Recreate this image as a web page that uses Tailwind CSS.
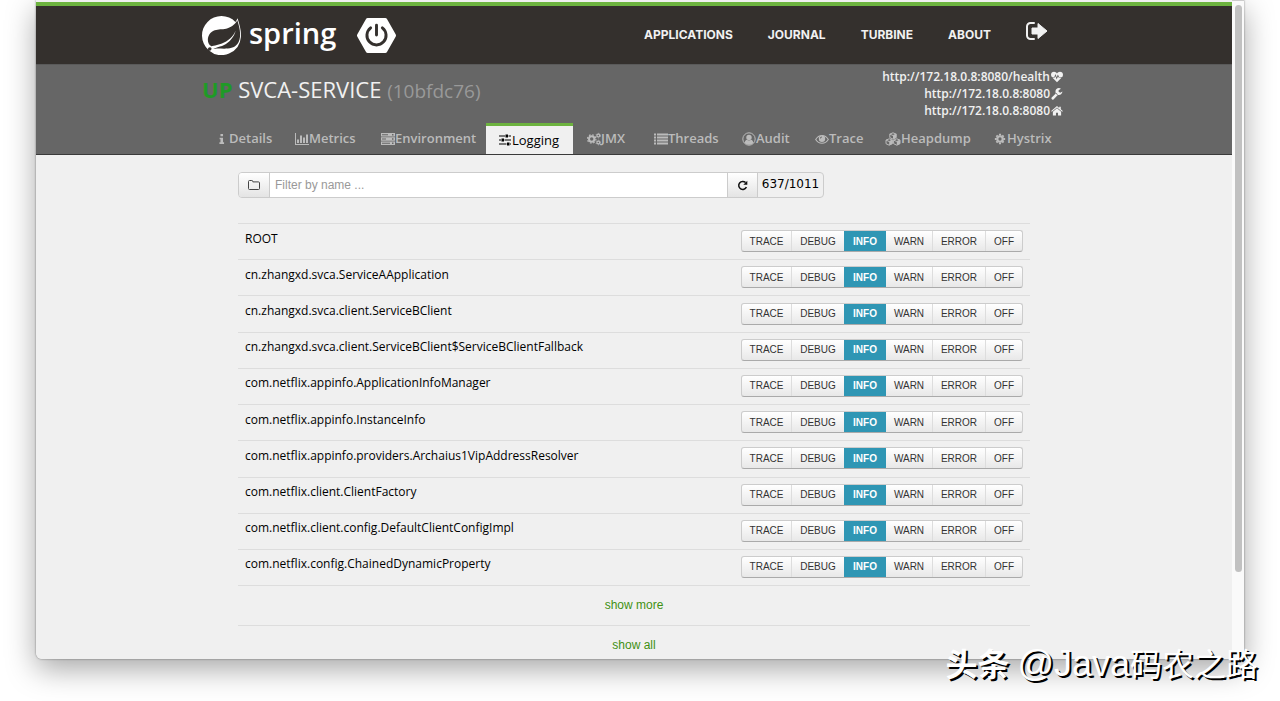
<!DOCTYPE html>
<html lang="en">
<head>
<meta charset="utf-8">
<title>SVCA-SERVICE - Logging</title>
<script src="https://cdn.jsdelivr.net/npm/@tailwindcss/browser@4"></script>
</head>
<body class="min-h-screen bg-white font-['Open_Sans','Noto_Sans',sans-serif] text-black">
<svg class="hidden" aria-hidden="true">
  <symbol id="i-info" viewBox="0 0 14 14"><path d="M5.200 1.200h3v2.500h-3zM4.200 5.400h4v5.400h1.200v2h-5.400v-2h1.200V7.400H4.200z"/></symbol>
  <symbol id="i-chart" viewBox="0 0 14 14"><path d="M0 1h1v11h13v1H0zM2 7.500h2V11H2zM5 3.500h2V11H5zM8 5.500h2V11H8zM11 2.500h2V11h-2z"/></symbol>
  <symbol id="i-server" viewBox="0 0 14 14"><path fill-rule="evenodd" d="M0 1h14v3.600H0zM1 2.300v1h6v-1zM11 2v1.500h1.500V2zM0 5.200h14v3.600H0zM1 6.500v1h4v-1zM11 6.200v1.500h1.500V6.200zM0 9.400h14V13H0zM1 10.700v1h8v-1zM11 10.400v1.500h1.500v-1.500z"/></symbol>
  <symbol id="i-sliders" viewBox="0 0 14 14"><path d="M1 2.500h6v1H1zM10.500 2.500H13v1h-2.500zM7.500 1.500h2.500v3H7.500zM1 6.500h2v1H1zM6.500 6.500H13v1H6.500zM3.500 5.500H6v3H3.500zM1 10.500h7.500v1H1zM12 10.500h1v1h-1zM9 9.500h2.500v3H9z"/></symbol>
  <symbol id="i-cogs" viewBox="0 0 14 14"><g fill="none" stroke="currentColor"><circle cx="4.700" cy="7" r="2.700" stroke-width="2"/><circle cx="4.700" cy="7" r="4.200" stroke-width="1.200" stroke-dasharray="1.650 1.650"/><circle cx="11.300" cy="3.600" r="1.400" stroke-width="1.200"/><circle cx="11.300" cy="3.600" r="2.300" stroke-width=".8" stroke-dasharray="1.200 1.200"/><circle cx="11.300" cy="10.500" r="1.400" stroke-width="1.200"/><circle cx="11.300" cy="10.500" r="2.300" stroke-width=".8" stroke-dasharray="1.200 1.200"/></g></symbol>
  <symbol id="i-list" viewBox="0 0 14 14"><path d="M0 1.500h2v2H0zM3 1.500h11v2H3zM0 4.500h2v2H0zM3 4.500h11v2H3zM0 7.500h2v2H0zM3 7.500h11v2H3zM0 10.500h2v2H0zM3 10.500h11v2H3z"/></symbol>
  <symbol id="i-user" viewBox="0 0 14 14"><circle cx="7" cy="7" r="6.200" fill="none" stroke="currentColor"/><circle cx="7" cy="5.500" r="2.700"/><path d="M2.500 11c.3-2 1.300-3 2.500-3.200.5.500 1.200.8 2 .8s1.500-.3 2-.8c1.200.2 2.200 1.200 2.500 3.200A6 6 0 0 1 7 12.800 6 6 0 0 1 2.500 11z"/></symbol>
  <symbol id="i-eye" viewBox="0 0 14 14"><path fill="none" stroke="currentColor" stroke-width="1.100" d="M.7 7.500C2.200 5 4.400 3.500 7 3.500s4.800 1.500 6.300 4C11.800 9.900 9.600 11.300 7 11.300S2.200 9.900.7 7.500z"/><path fill-rule="evenodd" d="M7 3.500a3.200 3.200 0 1 1 0 6.400 3.200 3.200 0 0 1 0-6.400zM7 4.600c-1.200 0-2 .9-2 2h.8c0-.7.500-1.200 1.200-1.200z"/></symbol>
  <symbol id="i-cubes" viewBox="0 0 16 14"><g fill="none" stroke="currentColor" stroke-linejoin="round"><path d="M8 .8l3.200 1.300v3.500L8 7.100 4.800 5.600V2.100zM4.800 2.100L8 3.500l3.200-1.400"/><path d="M4.200 6.800l3.200 1.300v3.600l-3.200 1.500L1 11.700V8.100zM1 8.100l3.200 1.400 3.200-1.400M11.800 6.800L15 8.100v3.600l-3.200 1.500-3.200-1.500V8.100zM8.600 8.100l3.200 1.400L15 8.100"/></g><path d="M8 3.500l3.200-1.400v3.500L8 7.100zM4.200 9.500l3.200-1.400v3.600l-3.200 1.500zM11.800 9.500L15 8.100v3.600l-3.200 1.500z"/></symbol>
  <symbol id="i-cog" viewBox="0 0 14 14"><g fill="none" stroke="currentColor"><circle cx="7" cy="7" r="3.200" stroke-width="2.600"/><path stroke-width="2.400" d="M7 1v2M7 11v2M1 7h2M11 7h2M2.800 2.800l1.300 1.300M9.900 9.900l1.300 1.300M2.800 11.200l1.300-1.300M9.900 4.100l1.300-1.300"/></g></symbol>
  <symbol id="i-heart" viewBox="0 0 14 14"><path d="M7 13L1.500 7.700h3L5.300 6l1.300 4 1.500-3.700.8 1.400h3.600zM.9 6.900C.3 6 0 5.200 0 4.400 0 2.400 1.400 1 3.600 1 5 1 6.200 1.900 7 2.800 7.800 1.900 9 1 10.400 1 12.600 1 14 2.400 14 4.400c0 .8-.3 1.600-.8 2.500H9.500L8 4.200 6.600 7.400 5.200 3.600 3.900 6.900z"/></symbol>
  <symbol id="i-wrench" viewBox="0 0 14 14"><path d="M6.200 5.900L.8 11.200c-.5.500-.5 1 0 1.500l.6.600c.5.400 1 .4 1.500 0L8.200 7.900zM13.400 4.200c-.3 2.300-2 4-4.100 4A4.200 4.200 0 0 1 5.200 4C5.200 1.800 7 .1 9.200.1c.9 0 1.700.2 2.400.7L8.900 2.500v2l1.800 1z"/></symbol>
  <symbol id="i-home" viewBox="0 0 14 14"><path d="M7 3.900l4.800 4V12.200H8.200V8.900H5.800v3.300H2.200V7.900zM7 1.300l2.600 2.200V1.900h1.800V5l2.400 2-.7.900L7 2.800.9 7.900.2 7z"/></symbol>
</svg>

<main class="mx-9 h-[659px] flex overflow-hidden rounded-b-md bg-[#f0f0f0] shadow-[0_0_2px_rgba(0,0,0,.5),0_10px_30px_rgba(0,0,0,.35)]">
  <div class="flex-1 min-w-0 pt-[2px] bg-[#f0f0f0]">
    <header class="border-t-4 border-[#6db33f] bg-[#34302d]">
      <div class="mx-auto max-w-[864px] h-[58px] flex justify-between">
        <a href="#" class="flex items-center text-white" aria-label="spring boot">
          <svg class="w-[39px] h-[39px]" viewBox="0 0 24 24" fill="currentColor"><path d="M21.8537 1.4158a10.4504 10.4504 0 0 1-1.284 2.2471A11.9666 11.9666 0 1 0 3.8518 20.7757l.4445.3951a11.9543 11.9543 0 0 0 19.6316-8.2971c.3457-3.0126-.568-6.8649-2.0742-11.458zM5.5805 20.8745a1.0174 1.0174 0 1 1-.1482-1.4323 1.0396 1.0396 0 0 1 .1482 1.4323zm16.1991-3.5806c-2.9385 3.9263-9.2601 2.5928-13.2852 2.7904 0 0-.7161.0494-1.4323.1481 0 0 .2717-.1234.6174-.2469 2.8398-.9877 4.1732-1.1853 5.9018-2.0742 3.2349-1.6545 6.4698-5.2844 7.1118-9.0379-1.2347 3.6053-4.9881 6.7167-8.3959 7.9761-2.3459.8643-6.5685 1.7039-6.5685 1.7039l-.1729-.0988c-2.8645-1.4076-2.9632-7.6304 2.2718-9.6306 2.2966-.889 4.4696-.395 6.9637-.9877 2.6422-.6174 5.7043-2.5929 6.939-5.1857 1.3828 4.1732 3.062 10.643.0493 14.6434z"/></svg>
          <span class="ml-2 w-[87px] pb-1 text-[29px] leading-8 font-semibold">spring</span>
          <svg class="ml-5 w-[41px] h-[37px]" viewBox="0 0 42 37"><path fill="#fff" stroke="#fff" stroke-width="4" stroke-linejoin="round" d="M12 2.500h18l9 16-9 16H12l-9-16z"/><g fill="none" stroke="#34302d" stroke-width="3" stroke-linecap="round"><path d="M15 10.600a9.800 9.800 0 1 0 12 0"/><path d="M21 8v10"/></g></svg>
        </a>
        <nav class="flex items-center gap-[35px] pr-[18px] text-[12px] font-bold text-[#f1f1f1] font-['Inter',sans-serif]">
          <a href="#">APPLICATIONS</a><a href="#">JOURNAL</a><a href="#">TURBINE</a><a href="#">ABOUT</a>
          <a href="#" aria-label="Sign out" class="pb-2"><svg class="w-[22px] h-[18px]" viewBox="0 0 22 18"><path fill="none" stroke="currentColor" stroke-width="2" stroke-linecap="round" d="M8 1H4.500A3.500 3.500 0 0 0 1 4.500v9A3.500 3.500 0 0 0 4.500 17H8"/><path fill="currentColor" stroke="currentColor" stroke-linejoin="round" d="M6 6h6V1.500L21 9l-9 7.500V12H6z"/></svg></a>
        </nav>
      </div>
    </header>

    <section class="bg-[#666] border-t border-[#5a5a5a] border-b border-b-[#3a3a3a]">
      <div class="mx-auto max-w-[864px]">
        <div class="h-[58px] flex justify-between">
          <h1 class="pt-[10px] text-[22px] leading-7 text-[#f1f1f1]"><span class="font-bold text-[#1f9a26]">UP</span> SVCA-SERVICE <small class="text-[19px] text-[#999]">(10bfdc76)</small></h1>
          <ul class="pt-[3px] pr-[3px] text-[12px] leading-[17px] font-semibold text-[#f1f1f1]">
            <li><a href="#" class="flex items-center justify-end gap-px">http://172.18.0.8:8080/health<svg class="size-3" fill="currentColor"><use href="#i-heart"/></svg></a></li>
            <li><a href="#" class="flex items-center justify-end gap-px">http://172.18.0.8:8080<svg class="size-3" fill="currentColor"><use href="#i-wrench"/></svg></a></li>
            <li><a href="#" class="flex items-center justify-end gap-px">http://172.18.0.8:8080<svg class="size-3" fill="currentColor"><use href="#i-home"/></svg></a></li>
          </ul>
        </div>
        <nav class="flex pl-[5px] text-[13px] leading-[31px] font-semibold text-[#bbb]">
          <a href="#" class="w-[76px] pl-2 flex items-center"><svg class="w-[14px] h-3" viewBox="0 0 14 14" fill="currentColor"><use href="#i-info"/></svg>Details</a>
          <a href="#" class="w-[86px] pl-3 flex items-center"><svg class="size-[14px]" fill="currentColor"><use href="#i-chart"/></svg>Metrics</a>
          <a href="#" class="w-[117px] pl-3 flex items-center"><svg class="size-[14px]" fill="currentColor"><use href="#i-server"/></svg>Environment</a>
          <a href="#" aria-current="page" class="w-[87px] mr-[2px] pl-3 flex items-center border-t-3 border-[#6db33f] bg-[#f0f0f0] leading-7 font-normal text-black"><svg class="size-[14px]" fill="currentColor"><use href="#i-sliders"/></svg>Logging</a>
          <a href="#" class="w-[67px] pl-3 flex items-center"><svg class="size-[14px]" fill="currentColor"><use href="#i-cogs"/></svg>JMX</a>
          <a href="#" class="w-[88px] pl-3 flex items-center"><svg class="size-[14px]" fill="currentColor"><use href="#i-list"/></svg>Threads</a>
          <a href="#" class="w-[73px] pl-3 flex items-center"><svg class="size-[14px]" fill="currentColor"><use href="#i-user"/></svg>Audit</a>
          <a href="#" class="w-[71px] pl-3 flex items-center"><svg class="size-[14px]" fill="currentColor"><use href="#i-eye"/></svg>Trace</a>
          <a href="#" class="w-[108px] pl-[11px] flex items-center"><svg class="w-4 h-[14px]" fill="currentColor"><use href="#i-cubes"/></svg>Heapdump</a>
          <a href="#" class="w-[80px] pl-3 flex items-center gap-px"><svg class="size-3" viewBox="0 0 14 14" fill="currentColor"><use href="#i-cog"/></svg>Hystrix</a>
        </nav>
      </div>
    </section>

    <section class="mx-auto max-w-[792px] pt-[17px] font-['Liberation_Sans',Arial,sans-serif] text-[12px]">
      <form class="flex h-[26px] w-[586px] rounded border border-[#ccc] overflow-hidden">
        <button type="button" aria-label="Packages" class="w-[31px] flex items-center justify-center border-r border-[#ccc] bg-linear-to-b from-white to-[#e4e4e4]"><svg class="w-3 h-[10px]" viewBox="0 0 12 10"><path fill="none" stroke="#444" d="M.5 1.500a1 1 0 0 1 1-1h2.300a1 1 0 0 1 1 1v.4h5.700a1 1 0 0 1 1 1v5.600a1 1 0 0 1-1 1h-9a1 1 0 0 1-1-1z"/></svg></button>
        <input type="text" aria-label="Filter by name" placeholder="Filter by name ..." class="flex-1 min-w-0 px-[5px] bg-white placeholder:text-[#999] outline-none">
        <button type="button" aria-label="Reload" class="w-[31px] flex items-center justify-center border-x border-[#ccc] bg-linear-to-b from-white to-[#e4e4e4]"><svg class="w-[11px] h-[11px]" viewBox="0 0 11 11"><path fill="none" stroke="#111" stroke-width="1.500" d="M8.600 2.600A4 4 0 1 0 9.400 7"/><path fill="#111" d="M10.300.8v4H6.300z"/></svg></button>
        <output class="w-[65px] text-center leading-[22px] font-['DejaVu_Sans',sans-serif] text-[12px]">637/1011</output>
      </form>

      <table class="mt-[25px] w-full h-[362px]">
        <tbody id="loggers"></tbody>
      </table>
      <div class="h-10 border-t border-[#ddd] text-center leading-[39px]"><a href="#" class="text-[#3f9012]">show more</a></div>
      <div class="border-t border-[#ddd] text-center leading-[38px]"><a href="#" class="text-[#3f9012]">show all</a></div>
    </section>
  </div>
  <div class="w-3 pt-1 flex justify-center border-t border-[#ccc] bg-[#fafafa]"><div class="w-[7px] h-[567px] rounded-full bg-[#c1c1c1]"></div></div>
</main>

<p class="absolute right-[22px] top-[638px] flex items-baseline whitespace-nowrap text-[32px] leading-[48px] font-['Noto_Sans_CJK_SC',sans-serif] text-white [text-shadow:2px_2px_0_#000]"><b>头条</b><span class="ml-2 font-['Liberation_Sans',sans-serif] text-[36px]">@Java</span>码农之路</p>

<script>
  const loggers = ['ROOT', 'cn.zhangxd.svca.ServiceAApplication', 'cn.zhangxd.svca.client.ServiceBClient',
    'cn.zhangxd.svca.client.ServiceBClient$ServiceBClientFallback', 'com.netflix.appinfo.ApplicationInfoManager',
    'com.netflix.appinfo.InstanceInfo', 'com.netflix.appinfo.providers.Archaius1VipAddressResolver',
    'com.netflix.client.ClientFactory', 'com.netflix.client.config.DefaultClientConfigImpl',
    'com.netflix.config.ChainedDynamicProperty'];
  const levels = `
    <button type="button" class="w-[49px]">TRACE</button>
    <button type="button" class="w-[53px] border-l border-[#ddd]">DEBUG</button>
    <button type="button" class="w-[42px] bg-[#2f96b4] font-bold text-white">INFO</button>
    <button type="button" class="w-[46px]">WARN</button>
    <button type="button" class="w-[53px] border-l border-[#ddd]">ERROR</button>
    <button type="button" class="w-[37px] border-l border-[#ddd]">OFF</button>`;
  document.getElementById('loggers').innerHTML = loggers.map(name => `
    <tr class="border-t border-[#ddd]">
      <td class="pl-[7px] pb-[6px] align-middle font-['Open_Sans',sans-serif] text-[12px]">${name}</td>
      <td class="pr-[7px] pb-px align-middle"><div class="ml-auto flex h-[22px] w-fit overflow-hidden rounded-[3px] border border-[#ccc] border-b-[#aaa] bg-linear-to-b from-white to-[#e8e8e8] text-[10px] text-[#333]">${levels}</div></td>
    </tr>`).join('');
</script>
</body>
</html>
